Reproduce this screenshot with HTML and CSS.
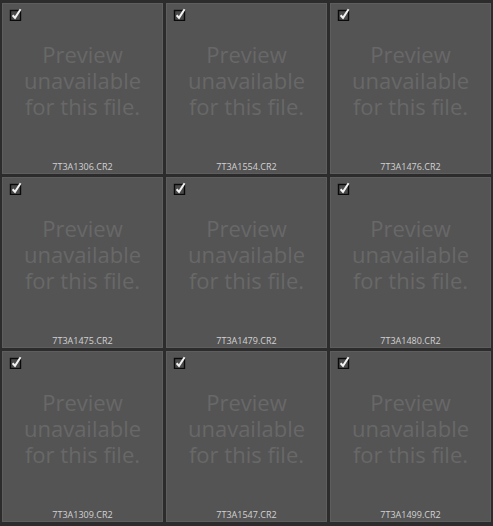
FILE: index.html
```html
<!DOCTYPE html>
<html>
<head>
<meta charset="utf-8">
<link rel="stylesheet" href="styles.css">
</head>
<body>
<div class="grid">
  <div class="cell"><svg class="check" width="14" height="14" viewBox="0 0 14 14"><rect x="1.5" y="3.5" width="10" height="10" fill="#4a4a4a" stroke="#0a0a0a" stroke-width="1.4"/><path d="M3.6 8.2 L6 10.8 L11.6 2.2" fill="none" stroke="#f2f2f2" stroke-width="2"/></svg><div class="msg"><span>Preview</span><span>unavailable</span><span>for this file.</span></div><div class="name">7T3A1306.CR2</div></div>
  <div class="cell"><svg class="check" width="14" height="14" viewBox="0 0 14 14"><rect x="1.5" y="3.5" width="10" height="10" fill="#4a4a4a" stroke="#0a0a0a" stroke-width="1.4"/><path d="M3.6 8.2 L6 10.8 L11.6 2.2" fill="none" stroke="#f2f2f2" stroke-width="2"/></svg><div class="msg"><span>Preview</span><span>unavailable</span><span>for this file.</span></div><div class="name">7T3A1554.CR2</div></div>
  <div class="cell"><svg class="check" width="14" height="14" viewBox="0 0 14 14"><rect x="1.5" y="3.5" width="10" height="10" fill="#4a4a4a" stroke="#0a0a0a" stroke-width="1.4"/><path d="M3.6 8.2 L6 10.8 L11.6 2.2" fill="none" stroke="#f2f2f2" stroke-width="2"/></svg><div class="msg"><span>Preview</span><span>unavailable</span><span>for this file.</span></div><div class="name">7T3A1476.CR2</div></div>
  <div class="cell"><svg class="check" width="14" height="14" viewBox="0 0 14 14"><rect x="1.5" y="3.5" width="10" height="10" fill="#4a4a4a" stroke="#0a0a0a" stroke-width="1.4"/><path d="M3.6 8.2 L6 10.8 L11.6 2.2" fill="none" stroke="#f2f2f2" stroke-width="2"/></svg><div class="msg"><span>Preview</span><span>unavailable</span><span>for this file.</span></div><div class="name">7T3A1475.CR2</div></div>
  <div class="cell"><svg class="check" width="14" height="14" viewBox="0 0 14 14"><rect x="1.5" y="3.5" width="10" height="10" fill="#4a4a4a" stroke="#0a0a0a" stroke-width="1.4"/><path d="M3.6 8.2 L6 10.8 L11.6 2.2" fill="none" stroke="#f2f2f2" stroke-width="2"/></svg><div class="msg"><span>Preview</span><span>unavailable</span><span>for this file.</span></div><div class="name">7T3A1479.CR2</div></div>
  <div class="cell"><svg class="check" width="14" height="14" viewBox="0 0 14 14"><rect x="1.5" y="3.5" width="10" height="10" fill="#4a4a4a" stroke="#0a0a0a" stroke-width="1.4"/><path d="M3.6 8.2 L6 10.8 L11.6 2.2" fill="none" stroke="#f2f2f2" stroke-width="2"/></svg><div class="msg"><span>Preview</span><span>unavailable</span><span>for this file.</span></div><div class="name">7T3A1480.CR2</div></div>
  <div class="cell"><svg class="check" width="14" height="14" viewBox="0 0 14 14"><rect x="1.5" y="3.5" width="10" height="10" fill="#4a4a4a" stroke="#0a0a0a" stroke-width="1.4"/><path d="M3.6 8.2 L6 10.8 L11.6 2.2" fill="none" stroke="#f2f2f2" stroke-width="2"/></svg><div class="msg"><span>Preview</span><span>unavailable</span><span>for this file.</span></div><div class="name">7T3A1309.CR2</div></div>
  <div class="cell"><svg class="check" width="14" height="14" viewBox="0 0 14 14"><rect x="1.5" y="3.5" width="10" height="10" fill="#4a4a4a" stroke="#0a0a0a" stroke-width="1.4"/><path d="M3.6 8.2 L6 10.8 L11.6 2.2" fill="none" stroke="#f2f2f2" stroke-width="2"/></svg><div class="msg"><span>Preview</span><span>unavailable</span><span>for this file.</span></div><div class="name">7T3A1547.CR2</div></div>
  <div class="cell"><svg class="check" width="14" height="14" viewBox="0 0 14 14"><rect x="1.5" y="3.5" width="10" height="10" fill="#4a4a4a" stroke="#0a0a0a" stroke-width="1.4"/><path d="M3.6 8.2 L6 10.8 L11.6 2.2" fill="none" stroke="#f2f2f2" stroke-width="2"/></svg><div class="msg"><span>Preview</span><span>unavailable</span><span>for this file.</span></div><div class="name">7T3A1499.CR2</div></div>
</div>
</body>
</html>
```

FILE: styles.css
```css
html, body {
  margin: 0;
  padding: 0;
  background: #2c2c2c;
  width: 493px;
  height: 526px;
  overflow: hidden;
}
.grid {
  display: grid;
  grid-template-columns: repeat(3, 161px);
  grid-template-rows: repeat(3, 171px);
  gap: 3px;
  padding: 3px 0 0 2px;
}
.cell {
  box-sizing: border-box;
  background: #545454;
  border: 1px solid #5e5e5e;
  display: flex;
  flex-direction: column;
  align-items: flex-start;
  padding: 3px 0 0 6px;
  font-family: "Open Sans", "Noto Sans", sans-serif;
}
.check {
  display: block;
  flex: none;
}
.msg {
  align-self: stretch;
  margin: 20px 0 0 -6px;
  display: flex;
  flex-direction: column;
  align-items: center;
  font-size: 22px;
  line-height: 26px;
  color: #686868;
}
.msg span {
  display: block;
  height: 26px;
  white-space: nowrap;
}
.name {
  align-self: stretch;
  margin: auto 0 0 -6px;
  text-align: center;
  font-size: 9px;
  line-height: 10px;
  padding-bottom: 1px;
  color: #d2d2d2;
}
```
